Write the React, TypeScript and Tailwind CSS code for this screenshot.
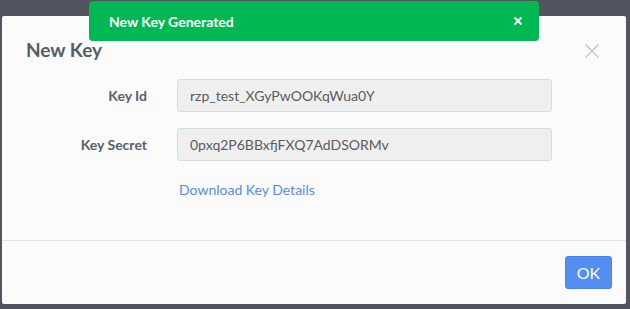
import React from "react";

export default function App() {
  return (
    <div
      className="relative w-[630px] h-[309px] overflow-hidden bg-[#52555f] pt-[16px] pl-[2px]"
      style={{ fontFamily: "Lato, 'Open Sans', sans-serif" }}
    >
      <div className="w-[624px] h-[288px] bg-[#fbfbfb] rounded-[2px] flex flex-col">
        <div className="flex items-start justify-between pl-[24px] pr-[26px] pt-[22px]">
          <h2 className="text-[19px] leading-[24px] font-bold text-[#555d66]">New Key</h2>
          <svg width="16" height="16" viewBox="0 0 16 16" className="mt-[5px]">
            <path d="M1.5 1.5 L14.5 14.5 M14.5 1.5 L1.5 14.5" stroke="#c4c4c4" strokeWidth="1.4" />
          </svg>
        </div>
        <div className="flex flex-col gap-[16px] pl-[24px] mt-[17px]">
          <div className="flex items-center gap-[30px]">
            <label className="w-[121px] text-right text-[14px] font-bold text-[#58616b]">Key Id</label>
            <div className="w-[375px] h-[33px] rounded-[3px] border border-[#d6dddd] bg-[#efefef] flex items-center px-[12px] text-[14px] text-[#5b5b5b]">
              rzp_test_XGyPwOOKqWua0Y
            </div>
          </div>
          <div className="flex items-center gap-[30px]">
            <label className="w-[121px] text-right text-[14px] font-bold text-[#58616b]">Key Secret</label>
            <div className="w-[375px] h-[33px] rounded-[3px] border border-[#d6dddd] bg-[#efefef] flex items-center px-[12px] text-[14px] text-[#5b5b5b]">
              0pxq2P6BBxfjFXQ7AdDSORMv
            </div>
          </div>
        </div>
        <div className="pl-[177px] mt-[16px]">
          <a className="text-[14px] leading-[20px] text-[#4f8fe6]">Download Key Details</a>
        </div>
        <div className="mt-auto border-t border-[#e3e3e3] h-[64px] flex items-center justify-end pr-[14px]">
          <button className="w-[47px] h-[33px] rounded-[3px] bg-[#528ff0] border border-[#4a86e8] text-white text-[16px]">
            OK
          </button>
        </div>
      </div>
      <div className="absolute left-[89px] top-[1px] w-[450px] h-[40px] rounded-[4px] bg-[#00b853] flex items-center justify-between pl-[20px] pr-[16px]">
        <span className="text-white text-[14px] font-bold">New Key Generated</span>
        <svg width="10" height="10" viewBox="0 0 10 10">
          <path d="M1.5 1.5 L8.5 8.5 M8.5 1.5 L1.5 8.5" stroke="white" strokeWidth="2" />
        </svg>
      </div>
    </div>
  );
}
